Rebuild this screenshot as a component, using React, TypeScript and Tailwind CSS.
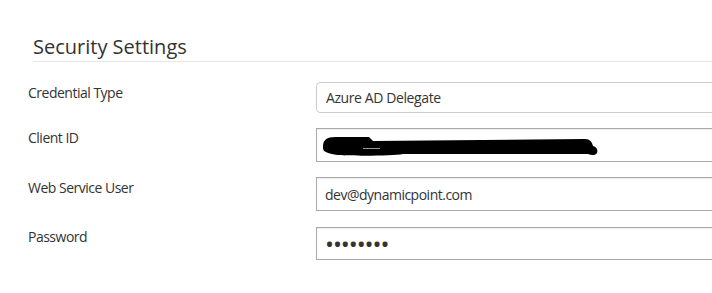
import React from "react";

function Label({ children, pt }: { children: React.ReactNode; pt: string }) {
  return (
    <div className={`w-[288px] shrink-0 text-[14px] leading-[20px] text-[#333] tracking-[-0.5px] ${pt}`}>{children}</div>
  );
}

export default function App() {
  return (
    <div className="w-[712px] h-[293px] overflow-hidden bg-white font-['Open_Sans',sans-serif] text-[#333]">
      <div className="pt-[33px] pl-[33px]">
        <h2 className="text-[20px] leading-[28px] font-normal text-[#333] border-b border-[#e5e5e5]">
          Security Settings
        </h2>
      </div>
      <div className="mt-[20px] pl-[28px] flex flex-col">
        <div className="flex mb-[15px]">
          <Label pt="pt-[1px]">Credential Type</Label>
          <div className="w-[420px] h-[31px] shrink-0 border border-[#cccccc] rounded-[4px] pl-[9px] flex items-center text-[14px] text-[#333] tracking-[-0.4px]">
            Azure AD Delegate
          </div>
        </div>
        <div className="flex mb-[15px]">
          <Label pt="pt-0">Client ID</Label>
          <div className="relative w-[420px] h-[34px] shrink-0 border border-[#a9a9a9] shadow-[inset_0_1px_1px_rgba(0,0,0,0.075)]">
            <svg
              className="absolute left-[6px] top-[8px]"
              width="276"
              height="20"
              viewBox="0 0 276 20"
            >
              <path
                d="M0,9 C0,3 4,0 12,0 L46,0 L50,4 L262,2 C267,2 269,5 270,9 C274,10 275,13 274,16 C272,19 268,18 265,17 L80,17 C70,19 30,19 15,18 C8,17 5,16 3,15 C0,14 0,12 0,9 Z"
                fill="#000"
              />
              <line x1="40" y1="11.5" x2="57" y2="11.5" stroke="#9a9a9a" strokeWidth="1" />
            </svg>
          </div>
        </div>
        <div className="flex mb-[16px]">
          <Label pt="pt-[1px]">Web Service User</Label>
          <div className="w-[420px] h-[34px] shrink-0 border border-[#a9a9a9] shadow-[inset_0_1px_1px_rgba(0,0,0,0.075)] pl-[8px] flex items-center text-[14px] text-[#333] tracking-[-0.5px]">
            dev@dynamicpoint.com
          </div>
        </div>
        <div className="flex">
          <Label pt="pt-0">Password</Label>
          <div className="w-[420px] h-[33px] shrink-0 border border-[#a9a9a9] shadow-[inset_0_1px_1px_rgba(0,0,0,0.075)] pl-[8px] flex items-center text-[24px] leading-none text-[#333] tracking-[-1.1px]">
            ••••••••
          </div>
        </div>
      </div>
    </div>
  );
}
